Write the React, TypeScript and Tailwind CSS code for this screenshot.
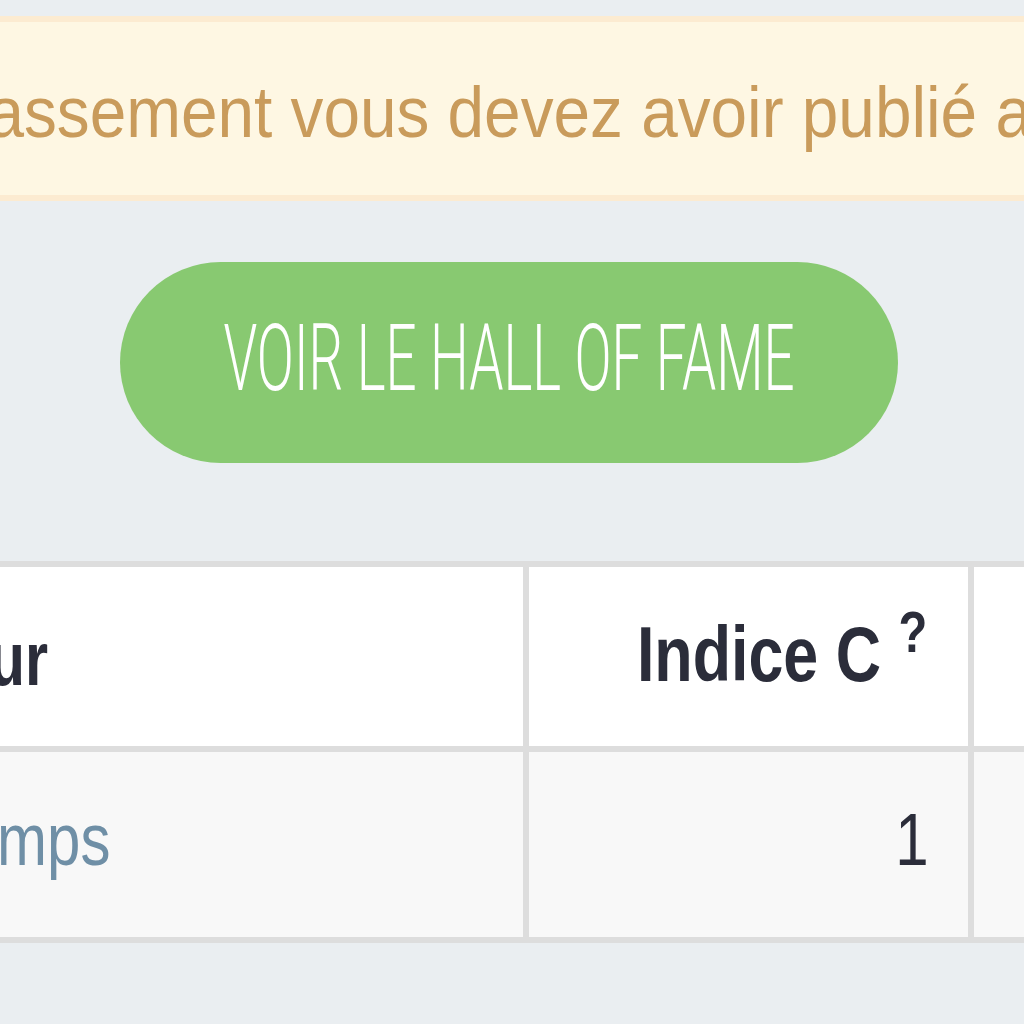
import React from "react";

export default function App() {
  return (
    <div className="w-[1024px] h-[1024px] overflow-hidden bg-[#eaeef1] flex flex-col pt-[16px]" style={{ fontFamily: '"Liberation Sans", Arial, sans-serif' }}>
      {/* Alert */}
      <div className="h-[185px] shrink-0 border-y-[6px] border-[#fcebd1] bg-[#fef7e3] pt-[53px] overflow-hidden">
        <div className="ml-[-60px] whitespace-nowrap">
          <span className="inline-block origin-left scale-x-[0.9] text-[73px] leading-none text-[#c99b5b]">
            classement vous devez avoir publié au moins
          </span>
        </div>
      </div>

      {/* Button */}
      <div className="mt-[61px] ml-[120px] w-[778px] h-[201px] shrink-0 rounded-full bg-[#88c971] flex items-center justify-center pb-[8px] overflow-hidden">
        <span className="inline-block shrink-0 whitespace-nowrap origin-center scale-x-[0.595] text-[92px] leading-none font-light text-white" style={{ fontFamily: 'Roboto, "Liberation Sans", sans-serif' }}>
          VOIR LE HALL OF FAME
        </span>
      </div>

      {/* Table */}
      <div className="mt-[98px] shrink-0 bg-[#dddddd] py-[6px] flex flex-col gap-[6px]">
        <div className="grid grid-cols-[523px_439px_1fr] gap-x-[6px] h-[179px]">
          <div className="bg-white pt-[54px] whitespace-nowrap">
            <span className="inline-block ml-[-143px] origin-left scale-x-[0.78] text-[76px] leading-none font-bold text-[#2b2d3a]">Auteur</span>
          </div>
          <div className="bg-white pt-[49px] pr-[41px] text-right whitespace-nowrap">
            <span className="inline-block origin-right scale-x-[0.815] text-[77px] leading-none font-bold text-[#2b2d3a]">
              Indice C <sup>?</sup>
            </span>
          </div>
          <div className="bg-white" />
        </div>
        <div className="grid grid-cols-[523px_439px_1fr] gap-x-[6px] h-[185px]">
          <div className="bg-[#f8f8f8] pt-[50px] whitespace-nowrap">
            <span className="inline-block ml-[-113px] origin-left scale-x-[0.8] text-[75px] leading-none text-[#6f8fa6]">Champs</span>
          </div>
          <div className="bg-[#f8f8f8] pt-[50px] pr-[39px] text-right whitespace-nowrap">
            <span className="inline-block origin-right scale-x-[0.8] text-[75px] leading-none text-[#2b2d3a]">1</span>
          </div>
          <div className="bg-[#f8f8f8]" />
        </div>
      </div>
    </div>
  );
}
